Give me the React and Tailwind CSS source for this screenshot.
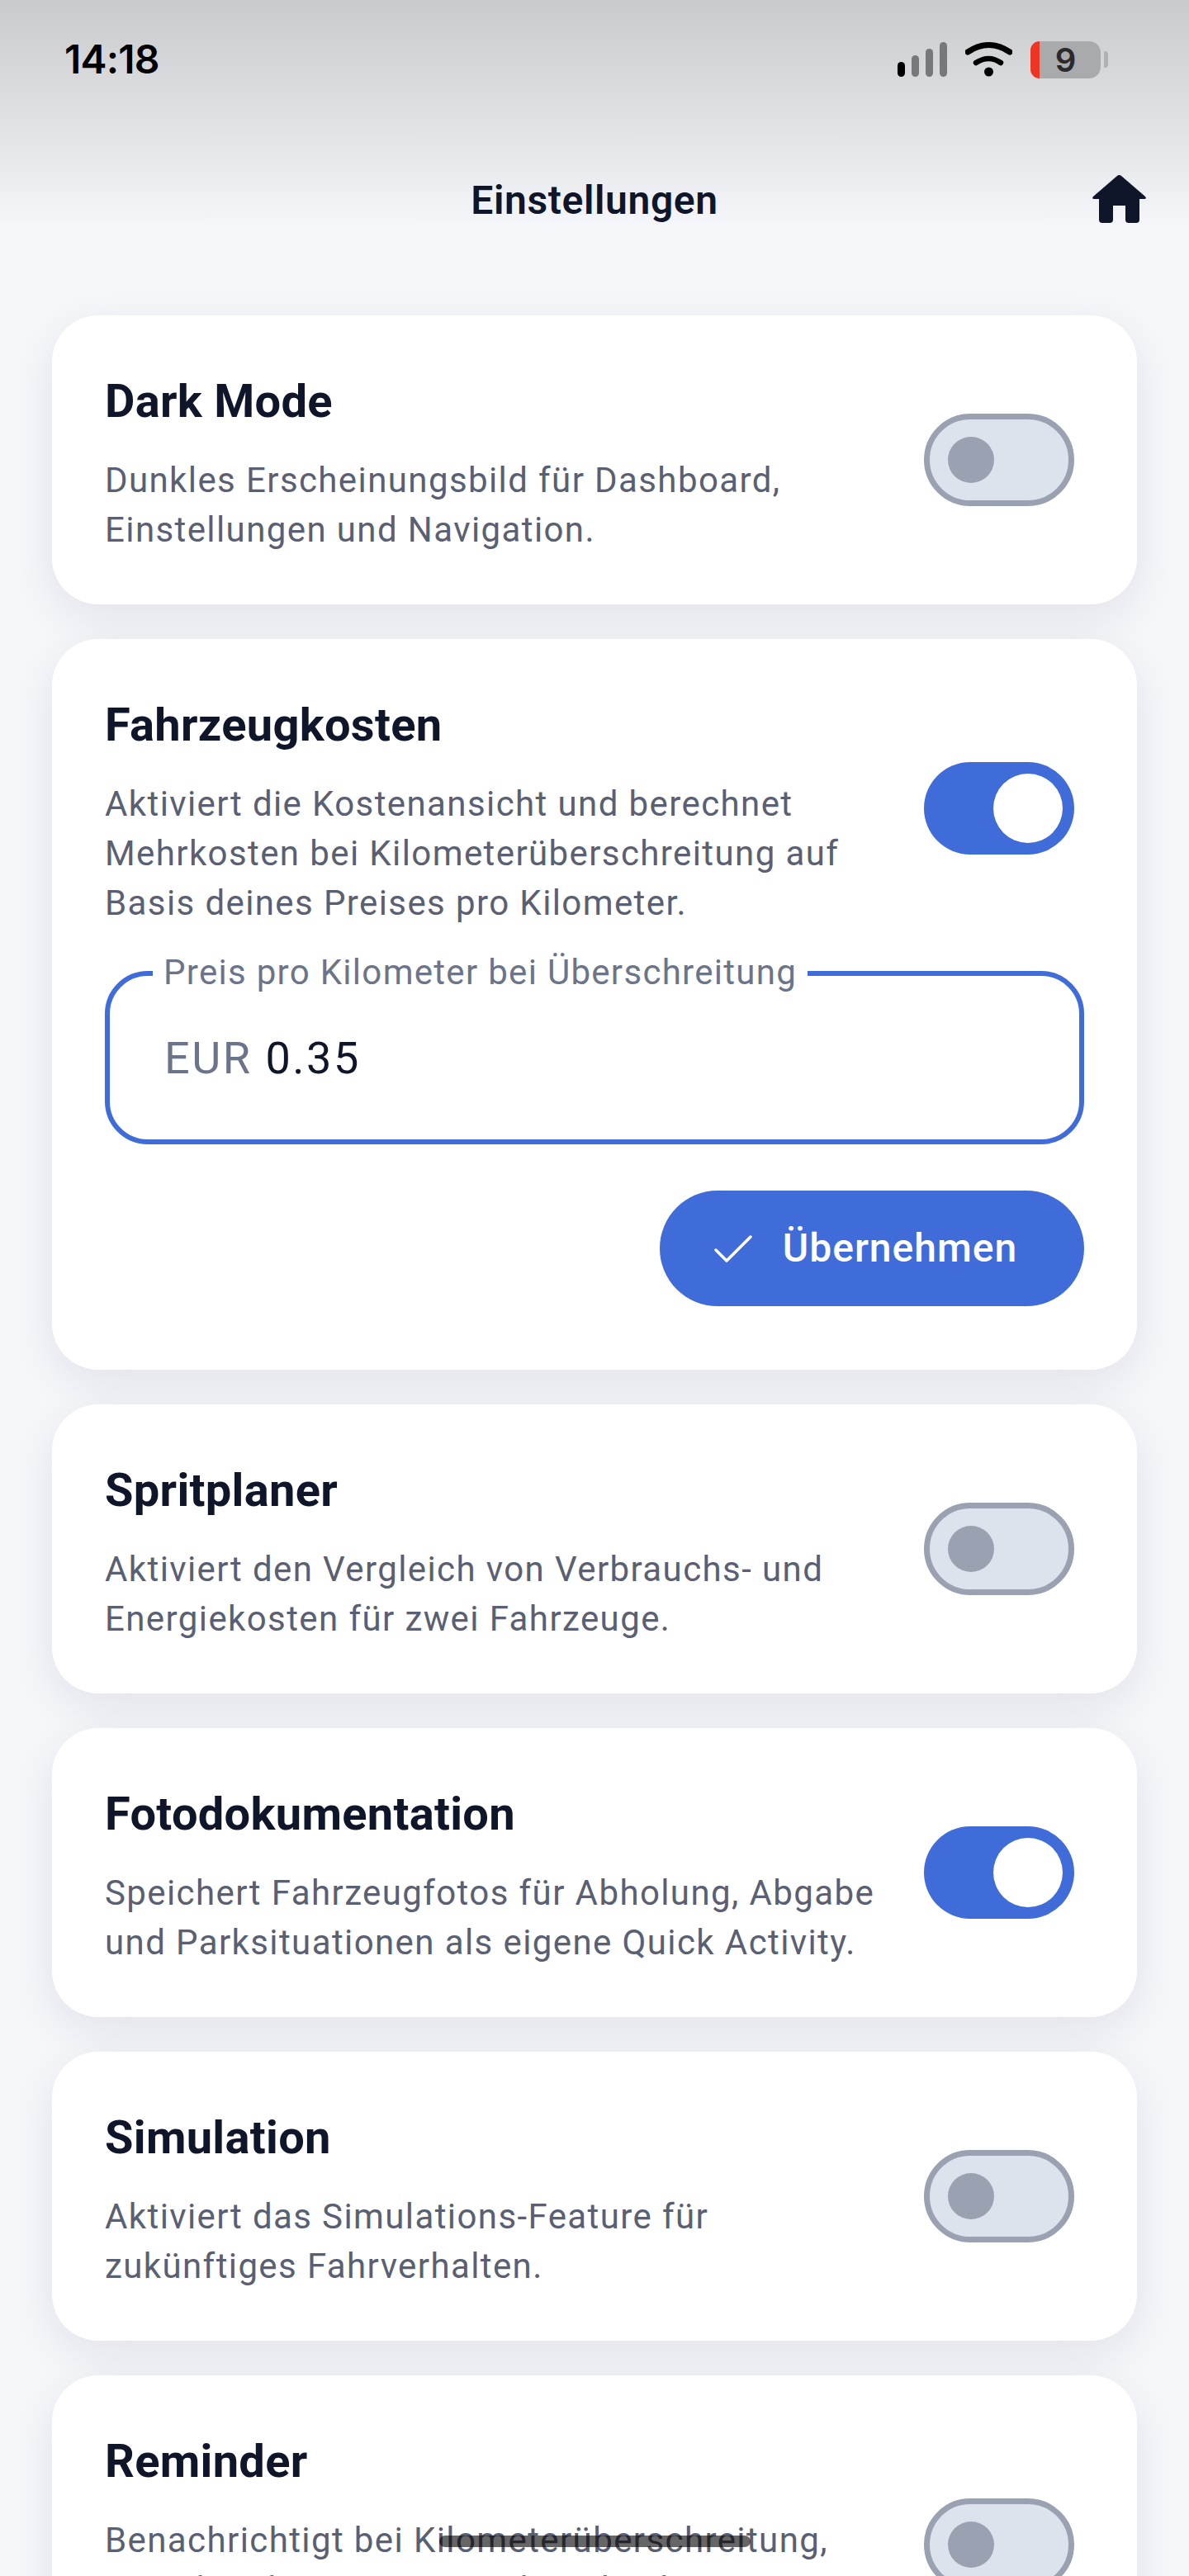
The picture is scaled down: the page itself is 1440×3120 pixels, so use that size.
import React from 'react';

const ROBOTO = "font-['Roboto',sans-serif]";

const Toggle = ({ on }) => (
    <div
        className={`w-[182px] h-[112px] rounded-full flex items-center shrink-0 mb-[4px] mr-[12px] ${
            on ? 'bg-[#406cd9] justify-end pr-[14px]' : 'bg-[#dde3ec] border-[7px] border-[#9aa1b1] pl-[22px]'
        }`}
    >
        <div className={on ? 'w-[84px] h-[84px] rounded-full bg-white' : 'w-[56px] h-[56px] rounded-full bg-[#9aa1b1]'}></div>
    </div>
);

const Row = ({ title, lines, on }) => (
    <div className="flex justify-between items-center">
        <div>
            <h2 className="text-[56px] leading-[80px] font-bold text-[#10162a] tracking-[0.3px]">{title}</h2>
            <div className="mt-[26px] text-[42px] leading-[60px] text-[#5a6072] tracking-[1.4px]">
                {lines.map((line) => (
                    <p key={line} className="whitespace-nowrap">{line}</p>
                ))}
            </div>
        </div>
        <Toggle on={on} />
    </div>
);

const Card = ({ children, bottom = 'pb-[60px]' }) => (
    <section className={`bg-white rounded-[56px] px-[64px] pt-[64px] ${bottom} shadow-[0_16px_56px_rgba(17,23,41,0.09)]`}>
        {children}
    </section>
);

const StatusIcons = () => (
    <div className="flex items-center gap-[22px]">
        {/* signal */}
        <div className="flex items-end gap-[8px] h-[42px]">
            <div className="w-[9px] h-[18px] rounded-full bg-black"></div>
            <div className="w-[9px] h-[26px] rounded-full bg-[#77787a]"></div>
            <div className="w-[9px] h-[34px] rounded-full bg-[#77787a]"></div>
            <div className="w-[9px] h-[42px] rounded-full bg-[#77787a]"></div>
        </div>
        {/* wifi */}
        <svg width="57" height="42" viewBox="0 0 57 42" fill="none" className="shrink-0">
            <path d="M3 12Q28.5 -5 54 12" stroke="#000" strokeWidth="7" strokeLinecap="round" />
            <path d="M13 25Q28.5 15 43 25" stroke="#000" strokeWidth="6.5" strokeLinecap="round" />
            <circle cx="28.5" cy="36" r="5.5" fill="#000" />
        </svg>
        {/* battery */}
        <div className="flex items-center gap-[4px]">
            <div className="relative w-[85px] h-[45px] rounded-[14px] bg-[#a9aaac] flex items-center justify-center">
                <div className="absolute left-0 top-0 bottom-0 w-[11px] rounded-l-[14px] bg-[#ee3524]"></div>
                <span className="font-['Inter',sans-serif] text-[40px] leading-[45px] font-semibold text-[#2a2a2c]">9</span>
            </div>
            <div className="w-[5px] h-[20px] rounded-r-[4px] bg-[#b0b1b3]"></div>
        </div>
    </div>
);

const PriceField = () => (
    <div className="relative mt-[52px] h-[210px] rounded-[52px] border-[6px] border-[#406cd9] flex items-center pl-[66px] text-[54px] tracking-[2.5px]">
        <span className="absolute left-[52px] -top-[24px] bg-white px-[13px] text-[42px] leading-[40px] text-[#6b7488] tracking-[1.3px] whitespace-nowrap">
            Preis pro Kilometer bei Überschreitung
        </span>
        <span className="text-[#6b7488]">EUR</span>
        <span className="ml-[16px] text-[#10162a]">0.35</span>
    </div>
);

const App = () => {
    return (
        <div className={`relative h-[3120px] overflow-hidden bg-[#f6f7fb] ${ROBOTO}`}>
            {/* Status bar + title */}
            <header className="h-[280px] bg-gradient-to-b from-[#c9cacc] to-[#f6f7fb] font-['Inter',sans-serif]">
                <div className="flex justify-between items-center pt-[49px] pl-[78px] pr-[98px] h-[95px]">
                    <span className="text-[48px] leading-[46px] font-semibold text-black tracking-[-0.8px]">14:18</span>
                    <StatusIcons />
                </div>
                <div className="flex justify-center items-center relative mt-[118px] h-[60px]">
                    <h1 className="text-[48px] font-semibold text-[#10162a] tracking-[0.6px] font-['Roboto',sans-serif]">Einstellungen</h1>
                    <svg width="65" height="58" viewBox="0 0 65 58" className="absolute right-[52px] -top-[1px]" fill="#10162a">
                        <path d="M30 1Q32.5 -1 35 1L64 26Q66 29 63 29L57 29L57 54Q57 58 53 58L44 58Q40 58 40 54L40 37L25 37L25 54Q25 58 21 58L12 58Q8 58 8 54L8 29L2 29Q-1 29 1 26Z" />
                    </svg>
                </div>
            </header>

            <main className="mt-[102px] px-[63px] flex flex-col gap-[42px]">
                <Card>
                    <Row title="Dark Mode" lines={['Dunkles Erscheinungsbild für Dashboard,', 'Einstellungen und Navigation.']} />
                </Card>

                <Card bottom="pb-[77px]">
                    <Row
                        title="Fahrzeugkosten"
                        on
                        lines={[
                            'Aktiviert die Kostenansicht und berechnet',
                            'Mehrkosten bei Kilometerüberschreitung auf',
                            'Basis deines Preises pro Kilometer.',
                        ]}
                    />
                    <PriceField />
                    <div className="flex justify-end mt-[56px]">
                        <button className="w-[514px] h-[140px] rounded-full bg-[#406cd9] text-white flex items-center justify-center gap-[37px] pr-[15px] text-[48px] tracking-[1px] font-medium">
                            <svg width="46" height="33" viewBox="0 0 46 33" fill="none" stroke="#fff" strokeWidth="3.5" strokeLinecap="round" strokeLinejoin="round">
                                <path d="M2 18L15 31L44 2" />
                            </svg>
                            Übernehmen
                        </button>
                    </div>
                </Card>

                <Card>
                    <Row title="Spritplaner" lines={['Aktiviert den Vergleich von Verbrauchs- und', 'Energiekosten für zwei Fahrzeuge.']} />
                </Card>

                <Card>
                    <Row
                        title="Fotodokumentation"
                        on
                        lines={['Speichert Fahrzeugfotos für Abholung, Abgabe', 'und Parksituationen als eigene Quick Activity.']}
                    />
                </Card>

                <Card>
                    <Row title="Simulation" lines={['Aktiviert das Simulations-Feature für', 'zukünftiges Fahrverhalten.']} />
                </Card>

                <Card>
                    <Row
                        title="Reminder"
                        lines={[
                            'Benachrichtigt bei Kilometerüberschreitung,',
                            'anstehender Wartung und Rückgabe',
                            'im Dashboard.',
                        ]}
                    />
                </Card>
            </main>

            {/* home indicator */}
            <div className="absolute left-[532px] top-[3071px] w-[377px] h-[14px] rounded-full bg-black/60"></div>
        </div>
    );
};

export default App;
